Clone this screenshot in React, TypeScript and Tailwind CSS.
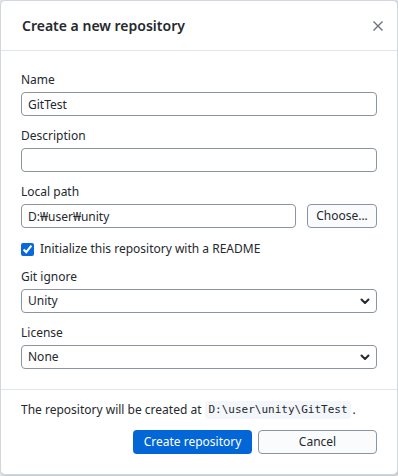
import React from "react";

const font = { fontFamily: '"Noto Sans", "Noto Sans CJK KR", sans-serif' };

function Chevron() {
  return (
    <svg
      width="12"
      height="12"
      viewBox="0 0 12 12"
      className="pointer-events-none absolute right-[6px] top-1/2 -translate-y-1/2"
    >
      <path d="M2.5 4.5 L6 8 L9.5 4.5" fill="none" stroke="#24292e" strokeWidth="2" strokeLinecap="round" strokeLinejoin="round" />
    </svg>
  );
}

function Field({ label, children, className = "" }: { label: string; children: React.ReactNode; className?: string }) {
  return (
    <div className={className}>
      <div className="h-4 text-[12px] leading-4 text-[#24292e]">{label}</div>
      <div className="mt-1 h-6">{children}</div>
    </div>
  );
}

const inputCls =
  "block h-6 w-full rounded-[4px] border border-[#8c959f] bg-white px-[6px] text-[12px] text-[#24292e] outline-none";

function SelectBox({ value }: { value: string }) {
  return (
    <div className="relative h-6">
      <select className={inputCls + " appearance-none pr-6"} defaultValue={value}>
        <option>{value}</option>
      </select>
      <Chevron />
    </div>
  );
}

export default function App() {
  return (
    <div className="h-[476px] w-[398px] bg-[#e1e4e8]" style={font}>
      <div className="flex h-[475px] w-[398px] flex-col rounded-[5px] border border-[#d0d7de] bg-white shadow-[1px_1px_2px_rgba(0,0,0,0.15)]">
        <div className="flex h-[50px] shrink-0 items-center justify-between border-b border-[#e1e4e8] pl-[21px] pr-[12px]">
          <h1 className="text-[14px] font-semibold text-[#24292e]">Create a new repository</h1>
          <svg width="12" height="12" viewBox="0 0 12 12" className="mr-[1px]">
            <path d="M1.5 1.5 L10.5 10.5 M10.5 1.5 L1.5 10.5" stroke="#6a737d" strokeWidth="1.4" />
          </svg>
        </div>

        <div className="h-[338px] shrink-0 px-[20px] pt-[21px]">
          <Field label="Name">
            <input className={inputCls} defaultValue="GitTest" />
          </Field>
          <Field label="Description" className="mt-3">
            <input className={inputCls} defaultValue="" />
          </Field>
          <Field label="Local path" className="mt-3">
            <div className="flex h-6 gap-[11px]">
              <input className={inputCls + " min-w-0 flex-1"} defaultValue="D:₩user₩unity" />
              <button className="h-6 w-[70px] shrink-0 rounded-[4px] border border-[#8c959f] bg-[#fafbfc] text-[12px] text-[#24292e]">
                Choose...
              </button>
            </div>
          </Field>
          <label className="mt-3 flex h-[18px] items-center gap-[6px]">
            <input type="checkbox" defaultChecked className="m-0 h-[13px] w-[13px] accent-[#0969da]" />
            <span className="text-[12px] text-[#24292e]">Initialize this repository with a README</span>
          </label>
          <Field label="Git ignore" className="mt-[11px]">
            <SelectBox value="Unity" />
          </Field>
          <Field label="License" className="mt-3">
            <SelectBox value="None" />
          </Field>
        </div>

        <div className="flex-1 border-t border-[#e1e4e8] px-[20px] pt-[10px]">
          <div className="flex h-5 items-center text-[12px] text-[#24292e]">
            <span>The repository will be created at</span>
            <code
              className="ml-[4px] mr-[2px] rounded-[4px] bg-[#f3f6fa] px-[3px] py-[1px] text-[11px]"
              style={{ fontFamily: '"DejaVu Sans Mono", monospace' }}
            >
              D:\user\unity\GitTest
            </code>
            <span>.</span>
          </div>
          <div className="mt-[10px] flex justify-end gap-[6px]">
            <button className="h-6 w-[119px] rounded-[4px] bg-[#0366d6] text-[12px] text-white">
              Create repository
            </button>
            <button className="h-6 w-[119px] rounded-[4px] border border-[#8c959f] bg-[#fafbfc] text-[12px] text-[#24292e]">
              Cancel
            </button>
          </div>
        </div>
      </div>
    </div>
  );
}
